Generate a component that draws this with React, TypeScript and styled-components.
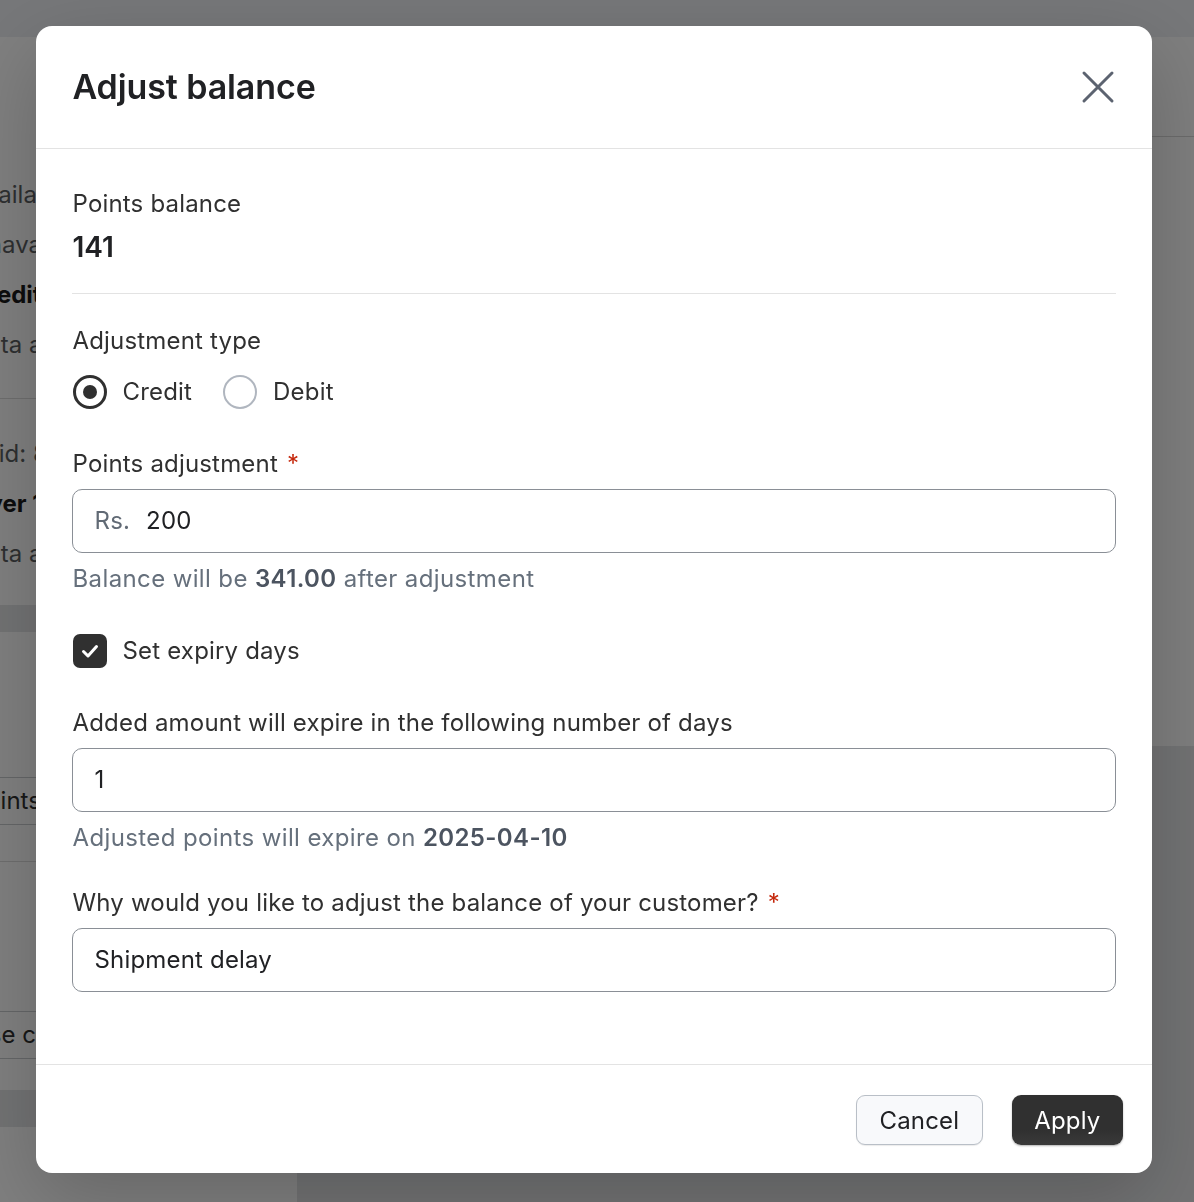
import React, { useState } from "react";
import styled, { createGlobalStyle } from "styled-components";

const GlobalStyle = createGlobalStyle`
    html, body {
        margin: 0;
        padding: 0;
        background: #e4e5e7;
        font-family: Inter, "Noto Sans", "Liberation Sans", sans-serif;
        color: #303030;
        overflow: hidden;
    }
    * { box-sizing: border-box; }
`

/* ---------- page behind the dialog ---------- */

const Page = styled.div`
    width: 1194px;
    height: 1202px;
    display: flex;
    flex-direction: column;
    overflow: hidden;
`

const TopBar = styled.div`
    height: 37px;
    flex-shrink: 0;
    background: #eceef2;
`

const Main = styled.div`
    display: flex;
    gap: 24px;
    margin-left: -50px;
    flex: 1;
`

const LeftColumn = styled.div`
    width: 347px;
    display: flex;
    flex-direction: column;
`

const Card = styled.div<{ $height: number; $gap?: number }>`
    background: #ffffff;
    height: ${p => p.$height}px;
    margin-top: ${p => p.$gap ?? 0}px;
    flex-shrink: 0;
    overflow: hidden;
`

const CardSection = styled.div<{ $top: number; $bottom: number }>`
    padding: ${p => p.$top}px 20px ${p => p.$bottom}px;
    display: flex;
    flex-direction: column;
    gap: 18px;
    border-bottom: 1px solid #dcdcdc;
    &:last-child { border-bottom: none; }
`

const BgLine = styled.div<{ $bold?: boolean }>`
    font-size: 24px;
    line-height: 32px;
    color: ${p => (p.$bold ? "#1a1a1a" : "#5c5f62")};
    font-weight: ${p => (p.$bold ? 700 : 400)};
    white-space: nowrap;
`

const BgButton = styled.div`
    align-self: flex-start;
    border: 1px solid #c9cccf;
    border-radius: 8px;
    padding: 7px 16px;
    font-size: 24px;
    line-height: 32px;
    white-space: nowrap;
    margin-left: -16px;
`

const RightColumn = styled.div`
    flex: 1;
    display: flex;
    flex-direction: column;
`

const RightCard = styled.div`
    background: #fdfdfd;
    height: 709px;
    display: flex;
    flex-direction: column;
`

const RightHeader = styled.div`
    height: 100px;
    border-bottom: 1px solid #d6d6d6;
`

/* ---------- dialog ---------- */

const Backdrop = styled.div`
    position: fixed;
    inset: 0;
    background: rgba(0, 0, 0, 0.5);
    padding: 26px 42px 29px 36px;
    display: flex;
`

const Modal = styled.div`
    flex: 1;
    background: #ffffff;
    border-radius: 16px;
    display: flex;
    flex-direction: column;
    overflow: hidden;
    box-shadow: 0 26px 80px rgba(0, 0, 0, 0.2);
`

const Header = styled.div`
    height: 123px;
    flex-shrink: 0;
    display: flex;
    align-items: center;
    justify-content: space-between;
    padding: 0 34px 0 36.5px;
    border-bottom: 1.5px solid #e3e3e3;
`

const Title = styled.h2`
    margin: 0;
    font-size: 34px;
    line-height: 40px;
    font-weight: 600;
    color: #202124;
    letter-spacing: -0.1px;
`

const CloseButton = styled.button`
    border: none;
    background: transparent;
    padding: 0;
    width: 40px;
    height: 40px;
    display: flex;
    align-items: center;
    justify-content: center;
    cursor: pointer;
`

const Body = styled.div`
    flex: 1;
    padding: 39px 36px 0 36.5px;
    display: flex;
    flex-direction: column;
`

const Label = styled.div`
    font-size: 24px;
    line-height: 32px;
    color: #303030;
    letter-spacing: 0.18px;
`

const Required = styled.span`
    color: #c5280c;
    margin-left: 9px;
`

const BalanceValue = styled.div`
    font-size: 28px;
    line-height: 36px;
    font-weight: 600;
    color: #202124;
    margin-top: 9px;
`

const Divider = styled.hr`
    border: none;
    border-top: 1.5px solid #e3e3e3;
    margin: 28px 0 31px -0.5px;
`

const ChoiceRow = styled.div`
    display: flex;
    align-items: center;
    gap: 31px;
    margin-top: 18px;
`

const Choice = styled.label`
    display: flex;
    align-items: center;
    gap: 16px;
    font-size: 24px;
    line-height: 32px;
    letter-spacing: 0.18px;
    cursor: pointer;
`

const RadioDot = styled.span<{ $checked: boolean }>`
    width: 34px;
    height: 34px;
    border-radius: 50%;
    border: ${p => (p.$checked ? "3px solid #303030" : "2.5px solid #b0b6bf")};
    display: flex;
    align-items: center;
    justify-content: center;
    &::after {
        content: "";
        width: 14px;
        height: 14px;
        border-radius: 50%;
        background: #303030;
        display: ${p => (p.$checked ? "block" : "none")};
    }
`

const Field = styled.div<{ $top: number }>`
    display: flex;
    flex-direction: column;
    margin-top: ${p => p.$top}px;
`

const InputBox = styled.div`
    margin-top: 8.5px;
    margin-left: -0.5px;
    height: 64px;
    border: 1.5px solid #8a8f96;
    border-radius: 10px;
    display: flex;
    align-items: center;
    padding: 0 21.5px;
    gap: 16px;
    font-size: 24px;
    letter-spacing: 0.18px;
`

const Prefix = styled.span`
    color: #616a75;
`

const Input = styled.input`
    flex: 1;
    border: none;
    outline: none;
    padding: 0;
    background: transparent;
    font: inherit;
    font-size: 24px;
    letter-spacing: 0.18px;
    color: #202124;
`

const Help = styled.div`
    margin-top: 10.5px;
    font-size: 24px;
    line-height: 32px;
    color: #66707c;
    letter-spacing: 0.38px;

    b {
        font-weight: 600;
        color: #4c5460;
    }
`

const CheckRow = styled.label`
    display: flex;
    align-items: center;
    gap: 16px;
    margin-top: 39px;
    font-size: 24px;
    line-height: 32px;
    letter-spacing: 0.18px;
    cursor: pointer;
`

const CheckBox = styled.span<{ $checked: boolean }>`
    width: 34px;
    height: 34px;
    border-radius: 7px;
    background: ${p => (p.$checked ? "#303030" : "#ffffff")};
    border: ${p => (p.$checked ? "none" : "2px solid #b0b6bf")};
    display: flex;
    align-items: center;
    justify-content: center;
`

const Footer = styled.div`
    height: 109px;
    flex-shrink: 0;
    border-top: 1.5px solid #e3e3e3;
    display: flex;
    align-items: center;
    justify-content: flex-end;
    gap: 29px;
    padding: 2px 29px 0 0;
`

const Button = styled.button<{ $primary?: boolean }>`
    height: 50px;
    padding: 0 22.5px;
    border-radius: 9px;
    font-family: inherit;
    font-size: 24px;
    letter-spacing: 0.18px;
    cursor: pointer;
    color: ${p => (p.$primary ? "#ffffff" : "#202124")};
    background: ${p => (p.$primary ? "linear-gradient(#303030 70%, #3a3a3a)" : "#f8f9fb")};
    border: ${p => (p.$primary ? "none" : "1.5px solid #b9bfc7")};
    box-shadow: ${p => (p.$primary ? "0 1px 2px rgba(0,0,0,0.3)" : "0 1px 1px rgba(0,0,0,0.08)")};
`

const CloseIcon = () => (
    <svg width="34" height="34" viewBox="0 0 34 34" fill="none">
        <path d="M3 3 L31 31 M31 3 L3 31" stroke="#5c6370" strokeWidth="3" strokeLinecap="round" />
    </svg>
)

const CheckIcon = () => (
    <svg width="20" height="20" viewBox="0 0 20 20" fill="none">
        <path d="M3.5 10.5 L8 15 L16.5 5.5" stroke="#ffffff" strokeWidth="3" strokeLinecap="round" strokeLinejoin="round" />
    </svg>
)

const App = () => {
    const [type, setType] = useState<"credit" | "debit">("credit")
    const [expiry, setExpiry] = useState(true)
    const [points, setPoints] = useState("200")
    const [days, setDays] = useState("1")
    const [reason, setReason] = useState("Shipment delay")

    return (
        <>
            <GlobalStyle />
            <Page>
                <TopBar />
                <Main>
                    <LeftColumn>
                        <Card $height={568}>
                            <CardSection $top={142} $bottom={37}>
                                <BgLine>Available</BgLine>
                                <BgLine>Unavailable</BgLine>
                                <BgLine $bold>Credits.</BgLine>
                                <BgLine>Data available</BgLine>
                            </CardSection>
                            <CardSection $top={39} $bottom={20}>
                                <BgLine>Paid: 80</BgLine>
                                <BgLine $bold>Over 19</BgLine>
                                <BgLine>Data available</BgLine>
                            </CardSection>
                        </Card>
                        <Card $height={458} $gap={27}>
                            <CardSection $top={145} $bottom={36}>
                                <BgButton>Points</BgButton>
                            </CardSection>
                            <CardSection $top={149} $bottom={20}>
                                <BgButton>Use credit</BgButton>
                            </CardSection>
                        </Card>
                        <Card $height={200} $gap={37} />
                    </LeftColumn>
                    <RightColumn>
                        <RightCard>
                            <RightHeader />
                        </RightCard>
                    </RightColumn>
                </Main>
            </Page>

            <Backdrop>
                <Modal role="dialog" aria-label="Adjust balance">
                    <Header>
                        <Title>Adjust balance</Title>
                        <CloseButton aria-label="Close">
                            <CloseIcon />
                        </CloseButton>
                    </Header>

                    <Body>
                        <Label>Points balance</Label>
                        <BalanceValue>141</BalanceValue>

                        <Divider />

                        <Label>Adjustment type</Label>
                        <ChoiceRow>
                            <Choice onClick={() => setType("credit")}>
                                <RadioDot $checked={type === "credit"} />
                                Credit
                            </Choice>
                            <Choice onClick={() => setType("debit")}>
                                <RadioDot $checked={type === "debit"} />
                                Debit
                            </Choice>
                        </ChoiceRow>

                        <Field $top={39}>
                            <Label>Points adjustment<Required>*</Required></Label>
                            <InputBox>
                                <Prefix>Rs.</Prefix>
                                <Input value={points} onChange={e => setPoints(e.target.value)} />
                            </InputBox>
                            <Help>Balance will be <b>341.00</b> after adjustment</Help>
                        </Field>

                        <CheckRow onClick={() => setExpiry(!expiry)}>
                            <CheckBox $checked={expiry}>{expiry && <CheckIcon />}</CheckBox>
                            Set expiry days
                        </CheckRow>

                        <Field $top={39}>
                            <Label>Added amount will expire in the following number of days</Label>
                            <InputBox>
                                <Input value={days} onChange={e => setDays(e.target.value)} />
                            </InputBox>
                            <Help>Adjusted points will expire on <b>2025-04-10</b></Help>
                        </Field>

                        <Field $top={33}>
                            <Label>Why would you like to adjust the balance of your customer?<Required>*</Required></Label>
                            <InputBox>
                                <Input value={reason} onChange={e => setReason(e.target.value)} />
                            </InputBox>
                        </Field>
                    </Body>

                    <Footer>
                        <Button>Cancel</Button>
                        <Button $primary>Apply</Button>
                    </Footer>
                </Modal>
            </Backdrop>
        </>
    )
}

export default App
